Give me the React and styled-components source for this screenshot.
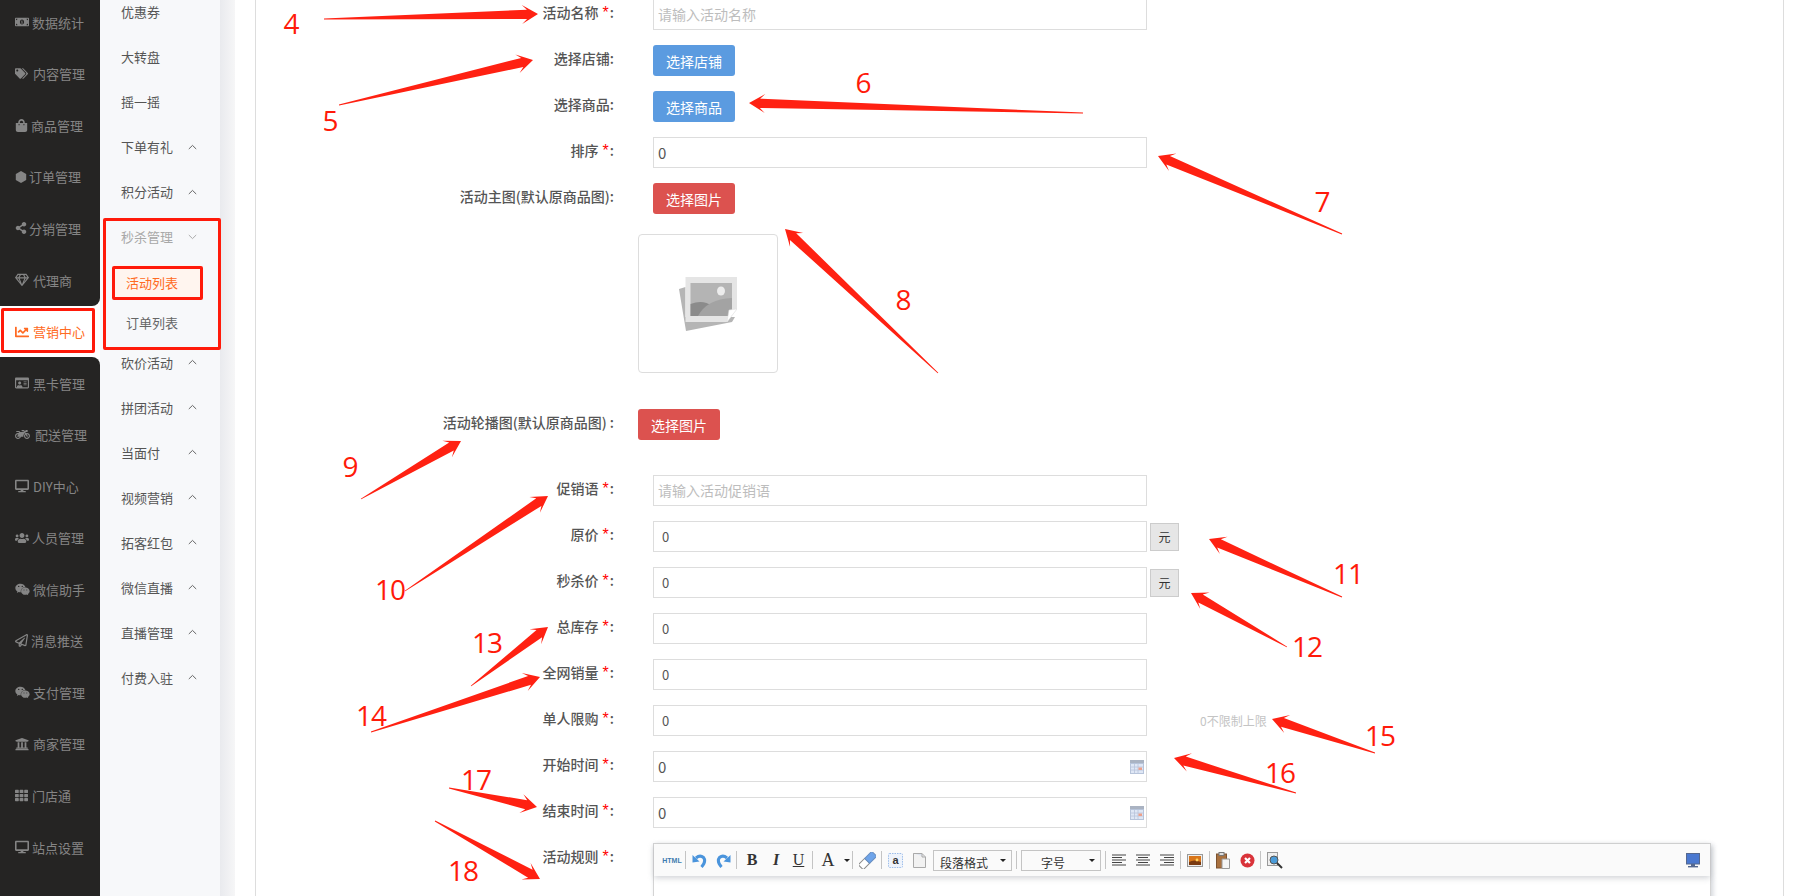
import React from 'react';
import styled, { createGlobalStyle } from 'styled-components';
import {
  FaMoneyBillAlt, FaTags, FaShoppingBag, FaShareAlt, FaRegGem, FaChartLine, FaRegIdCard,
  FaMotorcycle, FaDesktop, FaUsers, FaWeixin, FaRegPaperPlane, FaUniversity, FaTh,
} from 'react-icons/fa';

const GlobalStyle = createGlobalStyle`
  html, body {
    margin: 0;
    padding: 0;
    background: #fff;
    font-family: "Noto Sans CJK SC", "Noto Sans", sans-serif;
  }
  * { box-sizing: border-box; }
`;

const Page = styled.div`
  position: relative;
  display: flex;
  width: 1795px;
  height: 896px;
  overflow: hidden;
  background: #fff;
`;

/* ---------- dark sidebar ---------- */
const Sidebar = styled.nav`
  width: 100px;
  flex: none;
  display: flex;
  flex-direction: column;
  background: #fff;
  margin-top: -3.5px;
`;

const SideItem = styled.div`
  height: 51.56px;
  flex: none;
  display: flex;
  align-items: center;
  padding-left: 15px;
  font-size: 13px;
  color: ${(p) => (p.$active ? '#ff6a22' : '#858585')};
  background: ${(p) => (p.$active ? '#fff' : '#252423')};
  border-bottom-right-radius: ${(p) => (p.$beforeActive ? '8px' : '0')};
  border-top-right-radius: ${(p) => (p.$afterActive ? '8px' : '0')};
`;

const SideIcon = styled.span`
  width: ${(p) => p.$w}px;
  flex: none;
  display: flex;
  align-items: center;
  font-size: ${(p) => p.$size || 13}px;
`;

const SideFill = styled.div`
  flex: 1;
  background: #252423;
`;

/* ---------- light sub navigation ---------- */
const SubNav = styled.nav`
  width: 120px;
  flex: none;
  background: #f7f8fa;
`;

const SubList = styled.div`
  margin-top: -11px;
`;

const SubItem = styled.div`
  height: 45px;
  display: flex;
  align-items: center;
  justify-content: space-between;
  padding: 0 23px 0 21px;
  font-size: 13px;
  color: ${(p) => (p.$muted ? '#a8a8a8' : '#555')};
`;

const SubChildren = styled.div`
  padding: 6px 19px 0.5px 14px;
`;

const SubChild = styled.div`
  height: 34px;
  margin-bottom: 6px;
  padding-left: 12px;
  display: flex;
  align-items: center;
  font-size: 13px;
  color: ${(p) => (p.$active ? '#ff6a22' : '#666')};
  background: ${(p) => (p.$active ? '#fff5ef' : 'transparent')};
  &:last-child {
    margin-bottom: 0;
  }
`;

const Gutter = styled.div`
  width: 15px;
  flex: none;
  background: linear-gradient(to right, #e9eaee, #f6f6f7);
`;

/* ---------- form card ---------- */
const Main = styled.main`
  flex: 1;
  min-width: 0;
  padding: 0 11px 0 20px;
  background: #fff;
`;

const Card = styled.div`
  height: 896px;
  border-left: 1px solid #ddd;
  border-right: 1px solid #ddd;
  overflow: hidden;
`;

const Form = styled.form`
  margin-top: -1px;
`;

const Row = styled.div`
  display: flex;
  align-items: ${(p) => (p.$top ? 'flex-start' : 'center')};
  min-height: 31px;
  margin-bottom: ${(p) => p.$mb ?? 15}px;
`;

const Label = styled.label`
  width: 358px;
  flex: none;
  text-align: right;
  font-size: 14px;
  font-weight: 500;
  line-height: 20px;
  color: #555;
  padding-top: ${(p) => p.$pt ?? 0}px;
  padding-bottom: ${(p) => (p.$pt ? 0 : 5)}px;
  margin-right: ${(p) => p.$gap ?? 39}px;
`;

const Star = styled.span`
  font-family: "Liberation Sans", sans-serif;
  font-size: 16px;
  font-weight: 400;
  color: #f00;
  margin: 0 1px 0 4px;
`;

const Input = styled.input`
  width: 494px;
  height: 31px;
  flex: none;
  border: 1px solid #ddd;
  outline: none;
  background: #fff;
  color: #555;
  font-family: inherit;
  padding: 0 ${(p) => (p.$small ? 8 : 4)}px;
  padding-bottom: ${(p) => (p.placeholder ? 2 : 0)}px;
  font-size: ${(p) => (p.$small ? 13 : 15)}px;
  &::placeholder {
    color: #bdbdbd;
    font-size: 14px;
  }
`;

const Unit = styled.span`
  width: 29px;
  height: 28px;
  margin-left: 3px;
  display: flex;
  align-items: center;
  justify-content: center;
  background: #e6e6e6;
  border: 1px solid #ccc;
  font-size: 12px;
  color: #333;
`;

const Hint = styled.span`
  margin-left: 53px;
  font-size: 12px;
  color: #c4c4c4;
`;

const DateWrap = styled.div`
  position: relative;
  width: 494px;
  height: 31px;
`;

const CalendarSlot = styled.span`
  position: absolute;
  right: 3px;
  top: 9px;
  display: flex;
`;

const Button = styled.button`
  width: 82px;
  height: 31px;
  border: none;
  border-radius: 3px;
  background: ${(p) => (p.$danger ? '#dc524f' : '#5b9be0')};
  color: #fff;
  font-family: inherit;
  font-size: 14px;
  padding: 0;
`;

const ImageBox = styled.div`
  width: 140px;
  height: 139px;
  margin: 20px 0 36px 382px;
  border: 1px solid #ddd;
  border-radius: 4px;
  display: flex;
  align-items: center;
  justify-content: center;
`;

/* ---------- rich text editor ---------- */
const Editor = styled.div`
  width: 1058px;
  height: 80px;
  border: 1px solid #d4d4d4;
  box-shadow: 2px 2px 5px #d3d6da;
  background: #fff;
`;

const Toolbar = styled.div`
  height: 32px;
  display: flex;
  align-items: center;
  padding: 0 5px 0 6px;
  background: #fafafa;
  box-shadow: 0 2px 6px rgba(150, 155, 165, 0.45);
`;

const Tool = styled.span`
  width: ${(p) => p.$w || 24}px;
  height: 20px;
  flex: none;
  display: flex;
  align-items: center;
  justify-content: center;
  margin-left: ${(p) => (p.$end ? 'auto' : '0')};
`;

const HtmlTool = styled(Tool)`
  font-family: "Liberation Sans", sans-serif;
  font-size: 7px;
  font-weight: 700;
  color: #3f7cb0;
`;

const LetterTool = styled(Tool)`
  font-family: "Liberation Serif", serif;
  font-size: ${(p) => p.$size || 15}px;
  font-weight: ${(p) => (p.$plain ? 400 : 700)};
  font-style: ${(p) => (p.$italic ? 'italic' : 'normal')};
  text-decoration: ${(p) => (p.$under ? 'underline' : 'none')};
  color: #333;
`;

const Separator = styled.span`
  width: 1px;
  height: 18px;
  flex: none;
  margin: 0 1px;
  background: #c4c4c4;
`;

const Select = styled.span`
  width: ${(p) => p.$w}px;
  height: 21px;
  flex: none;
  position: relative;
  margin: 0 3px 0 ${(p) => p.$ml}px;
  padding: 3px 0 0 ${(p) => p.$pad}px;
  border: 1px solid #c4c4c4;
  font-size: 12px;
  line-height: 17px;
  color: #333;
`;

const Caret = styled.span`
  width: 0;
  height: 0;
  border-left: 3px solid transparent;
  border-right: 3px solid transparent;
  border-top: 3px solid #222;
`;

const SelectCaret = styled(Caret)`
  position: absolute;
  right: 5px;
  top: 8px;
`;

/* ---------- annotations drawn over the page ---------- */
const Overlay = styled.svg`
  position: absolute;
  left: 0;
  top: 0;
  pointer-events: none;
`;

const RedBox = styled.div`
  position: absolute;
  left: ${(p) => p.$x}px;
  top: ${(p) => p.$y}px;
  width: ${(p) => p.$w}px;
  height: ${(p) => p.$h}px;
  border: 3px solid #ff1a0a;
  border-radius: 2px;
`;

const Mark = styled.span`
  position: absolute;
  left: ${(p) => p.$x}px;
  top: ${(p) => p.$y - 1}px;
  transform: translate(-50%, -50%);
  font-family: "Open Sans", sans-serif;
  font-size: 28px;
  font-weight: 400;
  line-height: 1;
  letter-spacing: -1px;
  color: #ff1a0a;
`;

const HexIcon = () => (
  <svg width="1em" height="1em" viewBox="0 0 12 12" fill="currentColor">
    <polygon points="6,0 11.2,3 11.2,9 6,12 0.8,9 0.8,3" />
  </svg>
);

const sideItems = [
  ['数据统计', FaMoneyBillAlt, 17, 14],
  ['内容管理', FaTags, 18, 13],
  ['商品管理', FaShoppingBag, 16, 13],
  ['订单管理', HexIcon, 14, 12],
  ['分销管理', FaShareAlt, 14, 12],
  ['代理商', FaRegGem, 18, 14],
  ['营销中心', FaChartLine, 18, 14],
  ['黑卡管理', FaRegIdCard, 18, 14],
  ['配送管理', FaMotorcycle, 20, 15],
  ['DIY中心', FaDesktop, 18, 14],
  ['人员管理', FaUsers, 17, 14],
  ['微信助手', FaWeixin, 18, 15],
  ['消息推送', FaRegPaperPlane, 16, 13],
  ['支付管理', FaWeixin, 18, 15],
  ['商家管理', FaUniversity, 18, 14],
  ['门店通', FaTh, 17, 13],
  ['站点设置', FaDesktop, 17, 14],
];

const topSubs = [['优惠券'], ['大转盘'], ['摇一摇'], ['下单有礼', 1], ['积分活动', 1]];
const bottomSubs = ['砍价活动', '拼团活动', '当面付', '视频营销', '拓客红包', '微信直播', '直播管理', '付费入驻'];

const arrows = [
  [324, 19, 538, 14], [339, 105, 533, 60], [1083, 113, 749, 103], [1342, 234, 1158, 156],
  [938, 373, 785, 229], [361, 499, 461, 441], [405, 591, 548, 496], [1342, 597, 1209, 539],
  [1287, 647, 1191, 593], [471, 686, 548, 627], [371, 732, 540, 677], [1375, 753, 1272, 719],
  [1296, 793, 1174, 758], [449, 788, 537, 807], [435, 821, 540, 879],
];

const marks = [
  [4, 291, 24], [5, 330, 121], [6, 863, 83], [7, 1322, 202], [8, 903, 300], [9, 350, 467],
  [10, 390, 590], [11, 1348, 574], [12, 1307, 647], [13, 487, 643], [14, 371, 716],
  [15, 1380, 736], [16, 1280, 773], [17, 476, 780], [18, 463, 871],
];

// tail to tip polygon for one hand drawn looking arrow
const arrowPoints = ([x1, y1, x2, y2]) => {
  const len = Math.hypot(x2 - x1, y2 - y1);
  const ux = (x2 - x1) / len;
  const uy = (y2 - y1) / len;
  const at = (back, side) => `${(x2 - ux * back - uy * side).toFixed(1)},${(y2 - uy * back + ux * side).toFixed(1)}`;
  return [at(len, 0.4), at(11, 4.6), at(16, 9.5), at(0, 0), at(16, -9.5), at(11, -4.6), at(len, -0.4)].join(' ');
};

const Chevron = ({ down }) => (
  <svg width="9" height="6" viewBox="0 0 9 6" fill="none" stroke={down ? '#aaa' : '#666'} strokeWidth="1">
    <polyline points={down ? '0.8,1 4.5,4.6 8.2,1' : '0.8,5 4.5,1.4 8.2,5'} />
  </svg>
);

const PlaceholderIcon = () => (
  <svg width="58" height="54" viewBox="0 0 58 54">
    <polygon points="0,12 6.5,10 6.5,40 56,40 53,45 7,54" fill="#b5b5b5" />
    <polygon points="6.5,0 58,0 58,32 48,45 6.5,45" fill="#e5e5e5" />
    <rect x="11.5" y="6" width="41.5" height="33" fill="#b4b4b4" />
    <ellipse cx="42" cy="14" rx="4" ry="4.5" fill="#ececec" />
    <path d="M11.5 27 Q24 22 33 29 L22 39 H11.5 Z" fill="#8b8b8b" />
    <path d="M19 39 Q28 22 53 21 V39 Z" fill="#a3a3a3" />
    <polygon points="48,45 50,33 58,32" fill="#fff" stroke="#ddd" strokeWidth="0.5" />
  </svg>
);

const CalendarIcon = () => (
  <svg width="14" height="14" viewBox="0 0 14 14">
    <rect x="0" y="0" width="14" height="14" fill="#b7c4da" />
    <rect x="0" y="0" width="14" height="3" fill="#aab3c2" />
    <rect x="1" y="4" width="12" height="9" fill="#dfe7f5" />
    <path d="M4.5 4v9M8 4v9M1 7h12M1 10h12" stroke="#b7c4da" strokeWidth="0.8" />
    <rect x="8.5" y="7.5" width="3.5" height="2.5" fill="#eda08a" />
  </svg>
);

const HookIcon = ({ flip }) => (
  <svg width="15" height="15" viewBox="0 0 15 15" transform={flip ? 'scale(-1 1)' : undefined}>
    <path d="M4 5 Q8 1.5 11.5 4.5 Q14.5 8.5 9.5 14" fill="none" stroke="#4a94dc" strokeWidth="3" />
    <polygon points="0.5,2 7.5,8.5 0.5,9.5" fill="#4a94dc" />
  </svg>
);

const EraserIcon = () => (
  <svg width="17" height="17" viewBox="0 0 17 17">
    <g transform="rotate(-45 8.5 8.5)">
      <rect x="-1" y="5" width="9" height="7" fill="#fff" stroke="#8a8a8a" />
      <rect x="8" y="5" width="10" height="7" fill="#6ea4ea" stroke="#6a8fc0" />
    </g>
  </svg>
);

const AnchorIcon = () => (
  <svg width="15" height="15" viewBox="0 0 15 15">
    <rect x="0.5" y="0.5" width="14" height="14" rx="1" fill="#eef3fb" stroke="#9cbdea" strokeDasharray="1.5 1" />
    <text x="7.5" y="11" textAnchor="middle" fontFamily="Liberation Sans" fontWeight="700" fontSize="11" fill="#333">a</text>
  </svg>
);

const PageIcon = () => (
  <svg width="13" height="15" viewBox="0 0 13 15">
    <path d="M0.5 0.5H9L12.5 4V14.5H0.5Z" fill="#f2f2f2" stroke="#aaa" />
    <path d="M0.5 0.5H9V4H12.5" fill="#dde3ee" stroke="#aaa" />
  </svg>
);

const AlignIcon = ({ mode }) => {
  const widths = [14, 10, 14, 10, 14];
  return (
    <svg width="14" height="12" viewBox="0 0 14 12" stroke="#444" strokeWidth="1">
      {widths.map((w, i) => {
        const x = mode === 'left' ? 0 : mode === 'right' ? 14 - w : (14 - w) / 2;
        return <line key={i} x1={x} x2={x + w} y1={1 + i * 2.5} y2={1 + i * 2.5} />;
      })}
    </svg>
  );
};

const ImageIcon = () => (
  <svg width="16" height="13" viewBox="0 0 16 13">
    <rect x="0.5" y="0.5" width="15" height="12" fill="#eee" stroke="#999" />
    <rect x="2" y="2" width="12" height="9" fill="#d9761a" />
    <path d="M2 8 Q7 5 14 8 V11 H2Z" fill="#7a3a10" />
    <circle cx="10" cy="6" r="1.4" fill="#ffd35c" />
  </svg>
);

const PasteIcon = () => (
  <svg width="14" height="17" viewBox="0 0 14 17">
    <rect x="0.5" y="2" width="10" height="14" fill="#a9713f" stroke="#7c5230" />
    <rect x="3" y="0.5" width="5" height="3" fill="#ddd" stroke="#777" />
    <path d="M6 7H13.5V16.5H6Z" fill="#f5f5f5" stroke="#999" />
  </svg>
);

const CloseIcon = () => (
  <svg width="15" height="15" viewBox="0 0 15 15">
    <circle cx="7.5" cy="7.5" r="7" fill="#d9333a" />
    <path d="M5 5l5 5M10 5l-5 5" stroke="#fff" strokeWidth="2.2" />
  </svg>
);

const SearchIcon = () => (
  <svg width="16" height="17" viewBox="0 0 16 17">
    <rect x="0.5" y="0.5" width="10" height="13" fill="#eee" stroke="#999" />
    <circle cx="7" cy="8" r="4" fill="#4a9bd8" stroke="#555" />
    <path d="M10 11l5 5" stroke="#333" strokeWidth="2" />
  </svg>
);

const ScreenIcon = () => (
  <svg width="14" height="15" viewBox="0 0 14 15">
    <rect x="0.5" y="0.5" width="13" height="10.5" fill="#4a78d0" stroke="#55688f" />
    <rect x="5" y="11" width="4" height="2" fill="#55688f" />
    <rect x="2" y="13" width="10" height="1.4" fill="#55688f" />
  </svg>
);

const plainRows = [
  ['原价', true],
  ['秒杀价', true],
  ['总库存'],
  ['全网销量'],
];

const Required = ({ text }) => (
  <>
    {text}
    <Star>*</Star>:
  </>
);

const App = () => (
  <Page>
    <GlobalStyle />
    <Sidebar>
      {sideItems.map(([text, Icon, w, size], i) => (
        <SideItem key={text + i} $active={i === 6} $beforeActive={i === 5} $afterActive={i === 7}>
          <SideIcon $w={w} $size={size}><Icon /></SideIcon>
          {text}
        </SideItem>
      ))}
      <SideFill />
    </Sidebar>

    <SubNav>
      <SubList>
        {topSubs.map(([text, more]) => (
          <SubItem key={text}>{text}{more && <Chevron />}</SubItem>
        ))}
        <SubItem $muted>秒杀管理<Chevron down /></SubItem>
        <SubChildren>
          <SubChild $active>活动列表</SubChild>
          <SubChild>订单列表</SubChild>
        </SubChildren>
        {bottomSubs.map((text) => (
          <SubItem key={text}>{text}<Chevron /></SubItem>
        ))}
      </SubList>
    </SubNav>
    <Gutter />

    <Main>
      <Card>
        <Form>
          <Row>
            <Label><Required text="活动名称" /></Label>
            <Input placeholder="请输入活动名称" />
          </Row>
          <Row>
            <Label>选择店铺:</Label>
            <Button type="button">选择店铺</Button>
          </Row>
          <Row>
            <Label>选择商品:</Label>
            <Button type="button">选择商品</Button>
          </Row>
          <Row>
            <Label><Required text="排序" /></Label>
            <Input defaultValue="0" />
          </Row>
          <Row $mb={0}>
            <Label>活动主图(默认原商品图):</Label>
            <Button type="button" $danger>选择图片</Button>
          </Row>
          <ImageBox><PlaceholderIcon /></ImageBox>
          <Row $mb={35}>
            <Label $gap={24}>活动轮播图(默认原商品图) :</Label>
            <Button type="button" $danger>选择图片</Button>
          </Row>
          <Row>
            <Label><Required text="促销语" /></Label>
            <Input placeholder="请输入活动促销语" />
          </Row>
          {plainRows.map(([text, unit]) => (
            <Row key={text}>
              <Label><Required text={text} /></Label>
              <Input $small defaultValue="0" />
              {unit && <Unit>元</Unit>}
            </Row>
          ))}
          <Row>
            <Label><Required text="单人限购" /></Label>
            <Input $small defaultValue="0" />
            <Hint>0不限制上限</Hint>
          </Row>
          {['开始时间', '结束时间'].map((text) => (
            <Row key={text}>
              <Label><Required text={text} /></Label>
              <DateWrap>
                <Input defaultValue="0" />
                <CalendarSlot><CalendarIcon /></CalendarSlot>
              </DateWrap>
            </Row>
          ))}
          <Row $top $mb={0}>
            <Label $pt={3}><Required text="活动规则" /></Label>
            <Editor>
              <Toolbar>
                <HtmlTool>HTML</HtmlTool>
                <Separator />
                <Tool><HookIcon /></Tool>
                <Tool><HookIcon flip /></Tool>
                <Separator />
                <LetterTool $w={28} $size={16}>B</LetterTool>
                <LetterTool $w={20} $size={16} $italic>I</LetterTool>
                <LetterTool $w={25} $size={16} $under $plain>U</LetterTool>
                <Separator />
                <LetterTool $w={28} $size={18} $plain>A</LetterTool>
                <Tool $w={9}><Caret /></Tool>
                <Separator />
                <Tool $w={26}><EraserIcon /></Tool>
                <Separator />
                <Tool><AnchorIcon /></Tool>
                <Tool><PageIcon /></Tool>
                <Select $w={79} $ml={2} $pad={6}>段落格式<SelectCaret /></Select>
                <Separator />
                <Select $w={80} $ml={3} $pad={19}>字号<SelectCaret /></Select>
                <Separator />
                <Tool><AlignIcon mode="left" /></Tool>
                <Tool><AlignIcon mode="center" /></Tool>
                <Tool><AlignIcon mode="right" /></Tool>
                <Separator />
                <Tool $w={26}><ImageIcon /></Tool>
                <Separator />
                <Tool><PasteIcon /></Tool>
                <Tool><CloseIcon /></Tool>
                <Separator />
                <Tool $w={26}><SearchIcon /></Tool>
                <Tool $end><ScreenIcon /></Tool>
              </Toolbar>
            </Editor>
          </Row>
        </Form>
      </Card>
    </Main>

    <RedBox $x={1} $y={308} $w={94} $h={45} />
    <RedBox $x={103} $y={218} $w={118} $h={132} />
    <RedBox $x={112} $y={266} $w={91} $h={34} />

    <Overlay width="1795" height="896" viewBox="0 0 1795 896">
      {arrows.map((a) => (
        <polygon key={a.join('-')} points={arrowPoints(a)} fill="#ff2112" />
      ))}
    </Overlay>
    {marks.map(([n, x, y]) => (
      <Mark key={n} $x={x} $y={y}>{n}</Mark>
    ))}
  </Page>
);

export default App;
